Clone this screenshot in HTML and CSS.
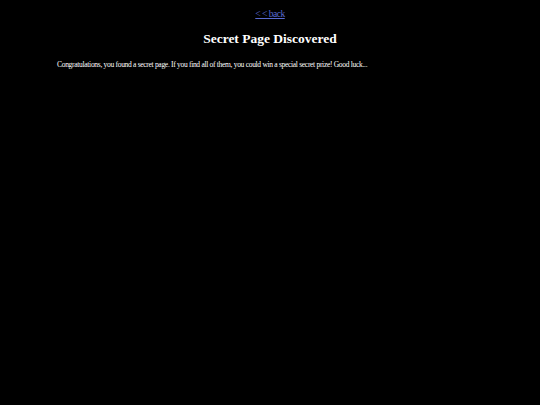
FILE: index.html
```html
<!DOCTYPE html>
<html>
<head>
<meta charset="utf-8">
<title>Secret Page Discovered</title>
<link rel="stylesheet" href="styles.css">
</head>
<body>
<div class="nav"><a href="#">&lt; &lt; back</a></div>
<h1 class="title">Secret Page Discovered</h1>
<p class="note">Congratulations, you found a secret page. If you find all of them, you could win a special secret prize! Good luck...</p>
</body>
</html>
```
FILE: styles.css
```css
html, body {
  background: #000;
}
body {
  margin: 0;
  padding: 9px 57px;
  color: #fff;
  font-family: "Liberation Serif", serif;
}
.nav {
  text-align: center;
  font-size: 9.5px;
  letter-spacing: -0.5px;
}
.nav a {
  color: #5a6ad0;
}
.title {
  text-align: center;
  font-size: 13.5px;
  margin: 12px 0 13px;
}
.note {
  font-size: 7.5px;
  letter-spacing: -0.3px;
  margin: 0;
}
```
